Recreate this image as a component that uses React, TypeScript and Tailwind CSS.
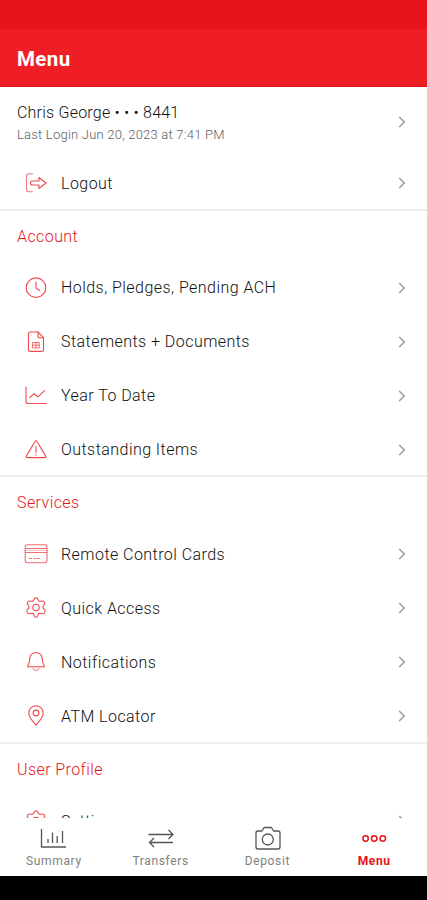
import type { ReactNode } from 'react';
import clsx from 'clsx';

type MenuItem = {
  label: string;
  icon: ReactNode;
};

type MenuSection = {
  title: string;
  items: MenuItem[];
};

const Icon = ({ children }: { children: ReactNode }) => (
  <svg
    width="24"
    height="24"
    viewBox="0 0 24 24"
    fill="none"
    stroke="currentColor"
    strokeWidth="1.1"
    strokeLinecap="round"
    strokeLinejoin="round"
    className="shrink-0"
  >
    {children}
  </svg>
);

const LogoutIcon = () => (
  <Icon>
    <path d="M8.5 2.8H5A2.5 2.5 0 0 0 2.5 5.3v13A2.5 2.5 0 0 0 5 20.8h3.5" opacity="0.75" />
    <path d="M8.5 10H15V6.5l7 5.5-7 5.5V14H8.5a2 2 0 0 1 0-4z" />
  </Icon>
);

const ClockIcon = () => (
  <Icon>
    <circle cx="12" cy="11.7" r="9.8" />
    <path d="M12 5.8V12l3.6 2.5" />
  </Icon>
);

const DocumentIcon = () => (
  <Icon>
    <path d="M14 2H6a1.5 1.5 0 0 0-1.5 1.5v16.4A1.5 1.5 0 0 0 6 21.4h12a1.5 1.5 0 0 0 1.5-1.5V7.7z" />
    <path d="M14 2v4.7a1 1 0 0 0 1 1h4.5" />
    <path d="M8.8 12.5h6.4V18H8.8zM8.8 15.2h6.4M12 12.5V18" strokeWidth="0.8" />
  </Icon>
);

const ChartIcon = () => (
  <Icon>
    <path d="M2 3v14.5a2 2 0 0 0 2 2h18.5" />
    <path d="M6 13.5l4-3.8 4 3.2 6.5-6.2" />
  </Icon>
);

const WarningIcon = () => (
  <Icon>
    <path d="M12 2.8c.5 0 .8.3 1 .7l8.700 14.600c.4.8 0 1.500-.8 1.500H3.100c-.8 0-1.200-.7-.8-1.500L11 3.500c.2-.4.5-.7 1-.7z" />
    <path d="M12 8.5v5.8M12 16.7v.5" />
  </Icon>
);

const CardIcon = () => (
  <Icon>
    <g opacity="0.8">
      <rect x="1.2" y="2.7" width="21.8" height="18" rx="2.5" />
      <path d="M1.2 6.5H23M1.2 10.5H23" />
      <path d="M1.2 8.5H23" opacity="0.4" />
      <path d="M5.5 16.5h2M10 16.5h1.5M12.8 16.5h2.4" />
    </g>
  </Icon>
);

const GearIcon = () => (
  <Icon>
    <path d="M10.5 2.5c.4-1 2.6-1 3 0l.7 1.8c.3.7 1.1 1.1 1.9 1l2-.3c1.1-.1 3.3 1.7 2.5 2.9l-1.3 1.9c-.5.7-.5 1.7 0 2.4l1.6 2c.8 1.1-.9 3.8-2.3 3.6l-2.5-.4c-.8-.1-1.6.3-1.9 1l-.7 2c-.4 1.1-2.6 1.1-3 0l-.7-2c-.3-.7-1.1-1.1-1.9-1l-2.5.4c-1.4.2-3.1-2.5-2.3-3.6l1.6-2c.5-.7.5-1.7 0-2.4L3.4 7.9C2.6 6.7 4.8 4.9 5.900 5l2 .3c.8.1 1.6-.3 1.9-1z" />
    <circle cx="12" cy="11.5" r="3.2" />
  </Icon>
);

const BellIcon = () => (
  <Icon>
    <path d="M12 2.5c-3.9 0-6.3 2.9-6.3 6.6 0 5-2.1 5.7-2.1 7.7h16.8c0-2-2.1-2.7-2.1-7.7 0-3.7-2.4-6.6-6.3-6.6z" />
    <path d="M8.8 18.3c.8 1.4 1.8 2.3 3.2 2.3s2.4-.9 3.2-2.3" opacity="0.6" />
  </Icon>
);

const PinIcon = () => (
  <Icon>
    <path d="M12 1.8a7.2 7.2 0 0 0-7.2 7.3c0 4.7 4.7 9.2 7.2 12 2.5-2.8 7.2-7.3 7.2-12A7.2 7.2 0 0 0 12 1.8z" />
    <circle cx="12" cy="9" r="2.9" />
  </Icon>
);

const sections: MenuSection[] = [
  {
    title: 'Account',
    items: [
      { label: 'Holds, Pledges, Pending ACH', icon: <ClockIcon /> },
      { label: 'Statements + Documents', icon: <DocumentIcon /> },
      { label: 'Year To Date', icon: <ChartIcon /> },
      { label: 'Outstanding Items', icon: <WarningIcon /> },
    ],
  },
  {
    title: 'Services',
    items: [
      { label: 'Remote Control Cards', icon: <CardIcon /> },
      { label: 'Quick Access', icon: <GearIcon /> },
      { label: 'Notifications', icon: <BellIcon /> },
      { label: 'ATM Locator', icon: <PinIcon /> },
    ],
  },
  {
    title: 'User Profile',
    items: [{ label: 'Settings', icon: <GearIcon /> }],
  },
];

const Chevron = () => (
  <svg width="8" height="12" viewBox="0 0 8 12" fill="none" stroke="#9b9b9b" strokeWidth="1.5" className="shrink-0">
    <path d="M1.2 1l5 5-5 5" />
  </svg>
);

const MenuRow = ({ label, icon }: MenuItem) => (
  <div className="flex h-[54px] items-center pr-[21px] pl-6 text-[#ef4a4e]">
    {icon}
    <span className="ml-[13px] flex-1 pt-px text-base font-light tracking-[0.45px] text-[#111]">{label}</span>
    <Chevron />
  </div>
);

const tabs = [
  {
    label: 'Summary',
    icon: (
      <svg width="28" height="24" viewBox="0 0 28 24" fill="none" stroke="currentColor" strokeWidth="1.3">
        <path d="M2.5 3v18H27" />
        <path d="M9 17v-4M13.5 17V6.5M18.2 17v-7M23.5 17V5" />
      </svg>
    ),
  },
  {
    label: 'Transfers',
    icon: (
      <svg width="28" height="24" viewBox="0 0 28 24" fill="none" stroke="currentColor" strokeWidth="1.3">
        <path d="M2.5 8.5H27M22.5 4L27 8.5 22.5 13" />
        <path d="M27 16.5H3.5M8 12l-4.5 4.5L8 21" />
      </svg>
    ),
  },
  {
    label: 'Deposit',
    icon: (
      <svg
        width="28"
        height="24"
        viewBox="0 0 28 24"
        fill="none"
        stroke="currentColor"
        strokeWidth="1.3"
        strokeLinejoin="round"
      >
        <path d="M5 5h4l2-3.5h7.5l2 3.5H25a2 2 0 0 1 2 2v14a2 2 0 0 1-2 2H5a2 2 0 0 1-2-2V7a2 2 0 0 1 2-2z" />
        <circle cx="14.8" cy="13.5" r="5.5" />
      </svg>
    ),
  },
  {
    label: 'Menu',
    active: true,
    icon: (
      <svg width="28" height="24" viewBox="0 0 28 24" fill="none" stroke="currentColor" strokeWidth="1.5">
        <circle cx="5.6" cy="12.5" r="2.7" />
        <circle cx="14.2" cy="12.5" r="2.7" />
        <circle cx="22.800" cy="12.5" r="2.7" />
      </svg>
    ),
  },
];

export default function App() {
  return (
    <div className="flex h-[900px] w-[427px] flex-col overflow-hidden bg-white font-[Roboto,sans-serif]">
      <div className="h-[29px] shrink-0 bg-[#e71419]" />
      <header className="flex h-[58px] shrink-0 items-center border-b border-[#e2151b] bg-[#ef1e25] pl-[17px]">
        <h1 className="pt-1 text-[20.5px] font-bold tracking-[0.4px] text-white">Menu</h1>
      </header>

      <main className="min-h-0 flex-1 overflow-hidden">
        <section className="h-[123.5px] border-b-2 border-[#efefef]">
          <div className="flex h-[69px] items-center justify-between pr-[21px] pl-[17px]">
            <div className="pt-[5px]">
              <p className="text-base leading-[22px] font-light tracking-[0.22px] text-[#111]">
                Chris George • • • 8441
              </p>
              <p className="text-[13px] leading-[22px] font-light tracking-[0.22px] text-[#606060]">
                Last Login Jun 20, 2023 at 7:41 PM
              </p>
            </div>
            <Chevron />
          </div>
          <MenuRow label="Logout" icon={<LogoutIcon />} />
        </section>

        {sections.map((section) => (
          <section key={section.title} className="h-[266.75px] border-b-2 border-[#efefef]">
            <h2 className="flex h-[50px] items-center pt-0.5 pl-[17px] text-base font-light tracking-[0.42px] text-[#e5161c]">
              {section.title}
            </h2>
            {section.items.map((item) => (
              <MenuRow key={item.label} {...item} />
            ))}
          </section>
        ))}
      </main>

      <nav className="grid h-[58px] shrink-0 grid-cols-4 bg-white">
        {tabs.map((tab) => (
          <div
            key={tab.label}
            className={clsx('flex flex-col items-center pt-2', tab.active ? 'text-[#e71419]' : 'text-[#555]')}
          >
            {tab.icon}
            <span
              className={clsx(
                'mt-[3px] pl-px text-xs leading-4',
                tab.active ? 'font-bold tracking-[0.6px]' : 'tracking-[0.65px] text-[#808080]'
              )}
            >
              {tab.label}
            </span>
          </div>
        ))}
      </nav>
      <div className="h-6 shrink-0 bg-black" />
    </div>
  );
}
